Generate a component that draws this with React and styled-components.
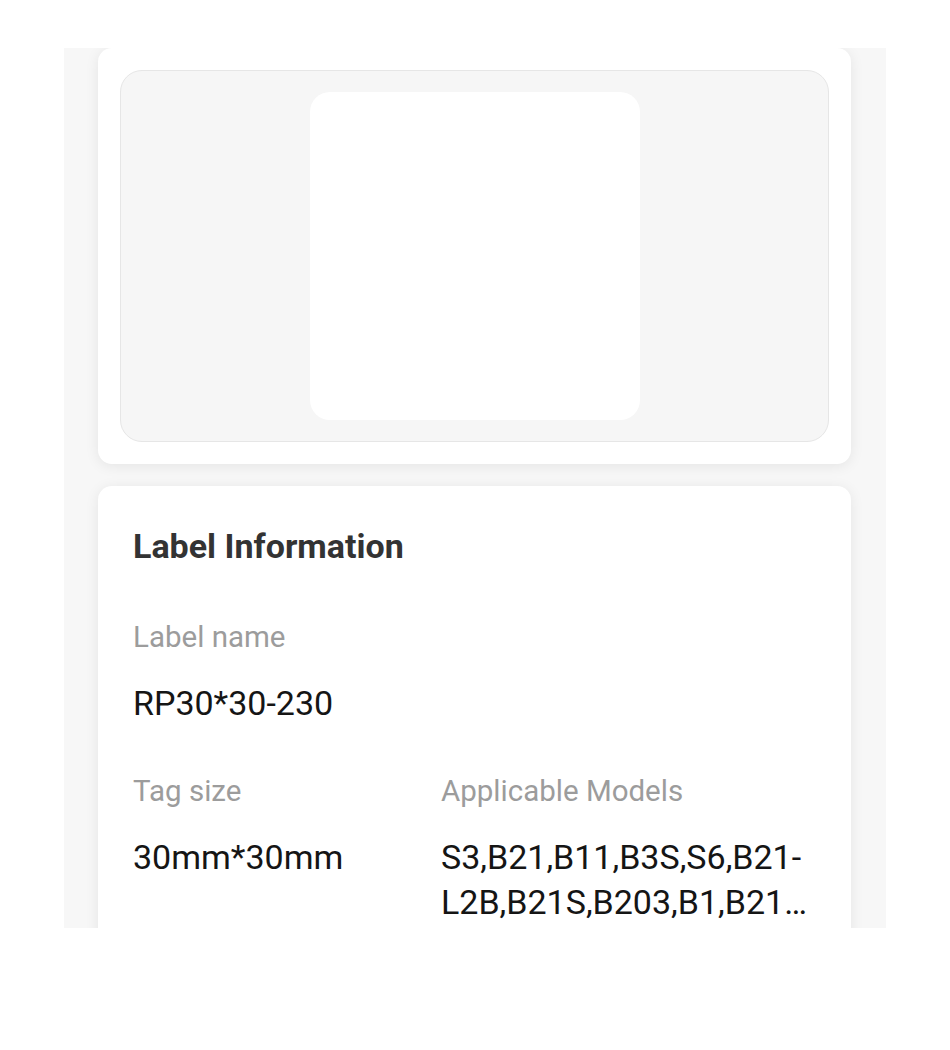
import styled, { createGlobalStyle } from 'styled-components'

const GlobalStyle = createGlobalStyle`
  html, body {
    margin: 0;
    padding: 0;
    background: #ffffff;
  }
  body {
    font-family: Roboto, "Liberation Sans", Arial, sans-serif;
  }
`

const Page = styled.div`
  width: 950px;
  height: 1050px;
  padding: 48px 64px 0;
  box-sizing: border-box;
`

const Viewport = styled.div`
  height: 880px;
  background: #f7f7f7;
  overflow: hidden;
  padding: 0 35px 0 34px;
  display: flex;
  flex-direction: column;
  gap: 22px;
`

const Card = styled.div`
  background: #ffffff;
  border-radius: 14px;
  box-shadow: 0 2px 14px rgba(0, 0, 0, 0.08);
  padding: ${(props) => props.$padding || '22px'};
  flex-shrink: 0;
`

const PreviewBox = styled.div`
  height: 372px;
  box-sizing: border-box;
  background: #f6f6f6;
  border: 1px solid #e6e6e6;
  border-radius: 22px;
  display: flex;
  align-items: center;
  justify-content: center;
`

const LabelSheet = styled.div`
  width: 330px;
  height: 328px;
  background: #ffffff;
  border-radius: 20px;
`

const Title = styled.h2`
  margin: 0 0 54px;
  font-size: 34px;
  line-height: 40px;
  font-weight: 700;
  color: #333333;
`

const Row = styled.div`
  display: grid;
  grid-template-columns: 308px 1fr;
  margin-bottom: 51px;
`

const Field = styled.div`
  display: flex;
  flex-direction: column;
  min-width: 0;
`

const FieldLabel = styled.div`
  font-size: 29.5px;
  line-height: 35px;
  color: #9c9c9c;
  margin-bottom: ${(props) => props.$gap || '28px'};
`

const FieldValue = styled.div`
  font-size: 34px;
  line-height: ${(props) => props.$lh || '40px'};
  color: #151515;
  ${(props) =>
    props.$clamp &&
    `
    display: -webkit-box;
    -webkit-box-orient: vertical;
    -webkit-line-clamp: 2;
    overflow: hidden;
    overflow-wrap: anywhere;
  `}
`

const labelInfo = {
  name: 'RP30*30-230',
  size: '30mm*30mm',
  models: 'S3,B21,B11,B3S,S6,B21-L2B,B21S,B203,B1,B21C2B,B21PRO,B31',
}

const App = () => {
  return (
    <>
      <GlobalStyle />
      <Page>
        <Viewport>
          <Card>
            <PreviewBox>
              <LabelSheet />
            </PreviewBox>
          </Card>

          <Card $padding="40px 35px 40px">
            <Title>Label Information</Title>
            <Row>
              <Field>
                <FieldLabel>Label name</FieldLabel>
                <FieldValue>{labelInfo.name}</FieldValue>
              </Field>
            </Row>
            <Row>
              <Field>
                <FieldLabel $gap="26px">Tag size</FieldLabel>
                <FieldValue $lh="45px">{labelInfo.size}</FieldValue>
              </Field>
              <Field>
                <FieldLabel $gap="26px">Applicable Models</FieldLabel>
                <FieldValue $lh="45px" $clamp>
                  {labelInfo.models}
                </FieldValue>
              </Field>
            </Row>
          </Card>
        </Viewport>
      </Page>
    </>
  )
}

export default App
